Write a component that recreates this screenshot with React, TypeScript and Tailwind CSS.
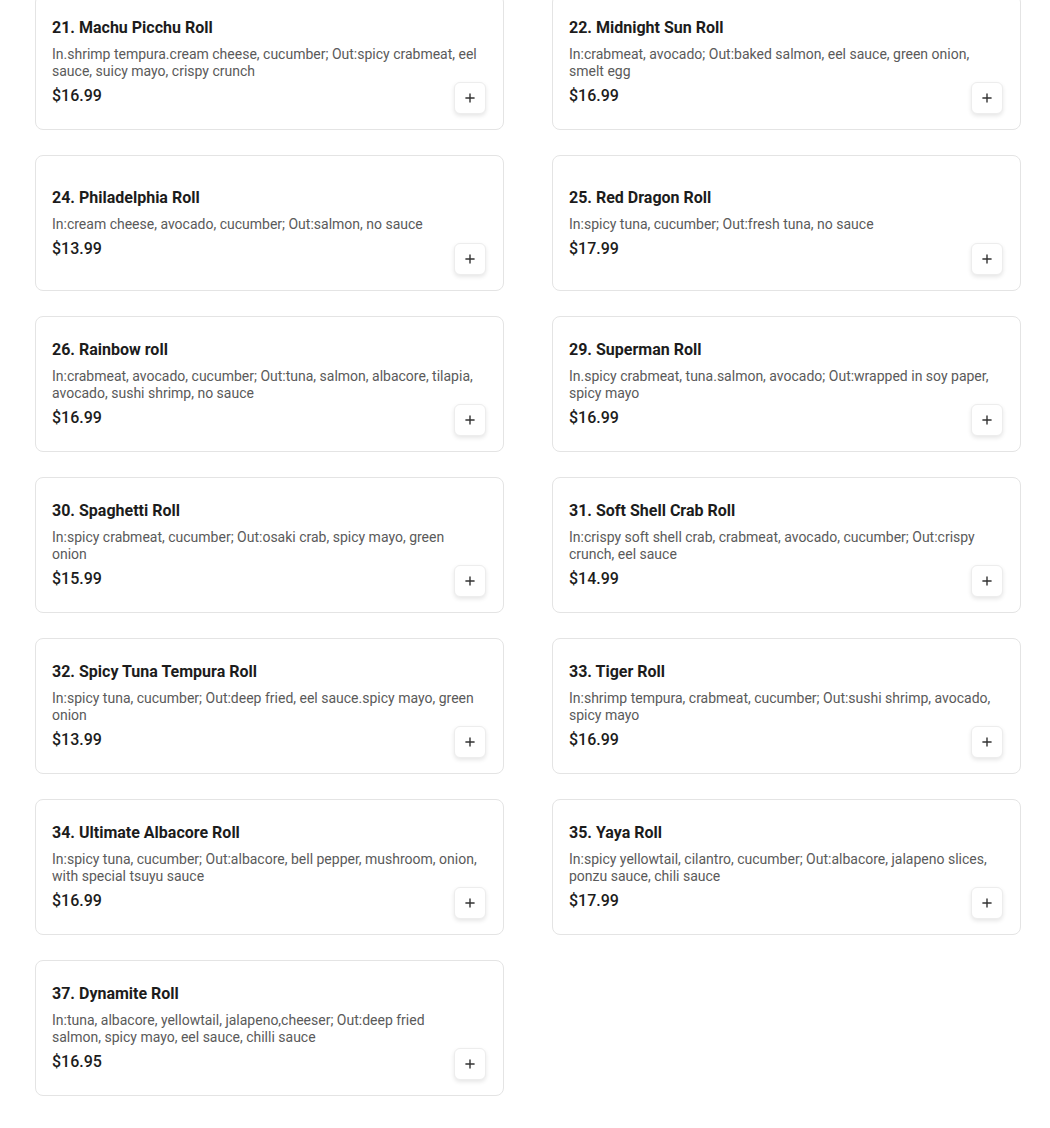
import { Plus } from "lucide-react";

type Roll = { name: string; desc: string; price: string };

const rolls: Roll[] = [
	{ name: "21. Machu Picchu Roll", desc: "In.shrimp tempura.cream cheese, cucumber; Out:spicy crabmeat, eel sauce, suicy mayo, crispy crunch", price: "$16.99" },
	{ name: "22. Midnight Sun Roll", desc: "In:crabmeat, avocado; Out:baked salmon, eel sauce, green onion, smelt egg", price: "$16.99" },
	{ name: "24. Philadelphia Roll", desc: "In:cream cheese, avocado, cucumber; Out:salmon, no sauce", price: "$13.99" },
	{ name: "25. Red Dragon Roll", desc: "In:spicy tuna, cucumber; Out:fresh tuna, no sauce", price: "$17.99" },
	{ name: "26. Rainbow roll", desc: "In:crabmeat, avocado, cucumber; Out:tuna, salmon, albacore, tilapia, avocado, sushi shrimp, no sauce", price: "$16.99" },
	{ name: "29. Superman Roll", desc: "In.spicy crabmeat, tuna.salmon, avocado; Out:wrapped in soy paper, spicy mayo", price: "$16.99" },
	{ name: "30. Spaghetti Roll", desc: "In:spicy crabmeat, cucumber; Out:osaki crab, spicy mayo, green onion", price: "$15.99" },
	{ name: "31. Soft Shell Crab Roll", desc: "In:crispy soft shell crab, crabmeat, avocado, cucumber; Out:crispy crunch, eel sauce", price: "$14.99" },
	{ name: "32. Spicy Tuna Tempura Roll", desc: "In:spicy tuna, cucumber; Out:deep fried, eel sauce.spicy mayo, green onion", price: "$13.99" },
	{ name: "33. Tiger Roll", desc: "In:shrimp tempura, crabmeat, cucumber; Out:sushi shrimp, avocado, spicy mayo", price: "$16.99" },
	{ name: "34. Ultimate Albacore Roll", desc: "In:spicy tuna, cucumber; Out:albacore, bell pepper, mushroom, onion, with special tsuyu sauce", price: "$16.99" },
	{ name: "35. Yaya Roll", desc: "In:spicy yellowtail, cilantro, cucumber; Out:albacore, jalapeno slices, ponzu sauce, chili sauce", price: "$17.99" },
	{ name: "37. Dynamite Roll", desc: "In:tuna, albacore, yellowtail, jalapeno,cheeser; Out:deep fried salmon, spicy mayo, eel sauce, chilli sauce", price: "$16.95" },
];

function RollCard({ roll }: { roll: Roll }) {
	return (
		<div className="relative flex items-center h-[136px] pl-4 pr-[26px] bg-white border border-[#e4e4e4] rounded-lg">
			<div className="flex-1">
				<h3 className="text-base leading-5 font-bold text-[#1c1c1c]">{roll.name}</h3>
				<p className="mt-2 text-sm leading-[17px] text-[#5a5a5a]">{roll.desc}</p>
				<div className="mt-[6px] text-base leading-5 font-medium text-[#1c1c1c]">{roll.price}</div>
			</div>
			<button className="absolute right-[17px] bottom-[15px] w-8 h-8 flex items-center justify-center bg-white border border-[#ededed] rounded-md shadow-[0_2px_4px_rgba(0,0,0,0.1)] text-[#333]">
				<Plus size={14} strokeWidth={2.4} />
			</button>
		</div>
	);
}

export default function App() {
	return (
		<div className="min-h-screen bg-white font-['Roboto',sans-serif] pl-[35px] pb-[33px]">
			<div className="-mt-[6px] grid grid-cols-[469px_469px] gap-x-[48px] gap-y-[25px]">
				{rolls.map((r) => (
					<RollCard key={r.name} roll={r} />
				))}
			</div>
		</div>
	);
}
